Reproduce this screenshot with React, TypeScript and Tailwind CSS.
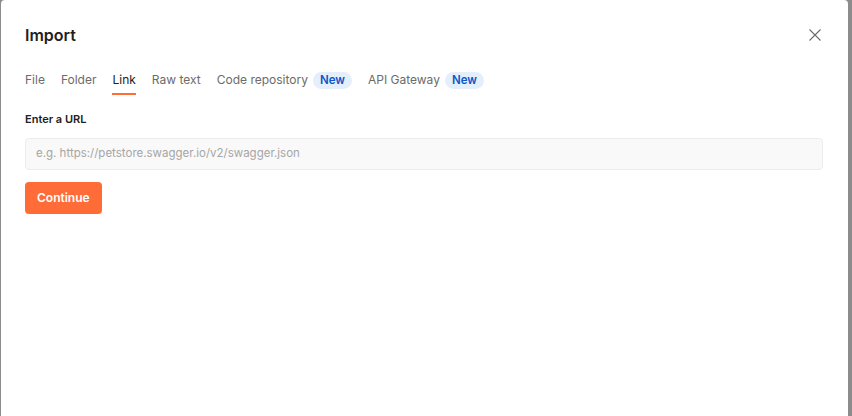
import React from "react";

const tabs = [
  { label: "File" },
  { label: "Folder" },
  { label: "Link", active: true },
  { label: "Raw text" },
  { label: "Code repository", badge: true },
  { label: "API Gateway", badge: true },
];

export default function App() {
  return (
    <div
      className="flex h-[416px] w-[852px] bg-[#8c8c8c] pl-px pr-[4px]"
      style={{ fontFamily: "Inter, 'Noto Sans', sans-serif" }}
    >
      <div className="flex-1 rounded-t-[4px] bg-white px-6 pt-[24px]">
        {/* Header */}
        <div className="flex items-center justify-between">
          <h1 className="text-[16px] font-semibold leading-[22px] text-[#212121]">
            Import
          </h1>
          <button className="mr-[2px] text-[#6b6b6b]">
            <svg width="14" height="14" viewBox="0 0 14 14" fill="none">
              <path
                d="M1.5 1.5L12.5 12.5M12.5 1.5L1.5 12.5"
                stroke="currentColor"
                strokeWidth="1.1"
              />
            </svg>
          </button>
        </div>

        {/* Tabs */}
        <div className="mt-[24px] flex items-center gap-4 text-[12px] leading-5">
          {tabs.map((t) => (
            <div key={t.label} className="relative flex items-center gap-[5px] pb-[3px]">
              <span className={t.active ? "text-[#212121]" : "text-[#6b6b6b]"}>
                {t.label}
              </span>
              {t.badge && (
                <span className="rounded-full bg-[#e5effc] px-[7px] text-[11.5px] font-semibold leading-[17px] text-[#0b57c5]">
                  New
                </span>
              )}
              {t.active && (
                <span className="absolute bottom-[-2px] left-0 right-0 h-[2px] bg-[#ff6c37]" />
              )}
            </div>
          ))}
        </div>

        {/* Body */}
        <div className="mt-[18px] text-[11px] font-semibold leading-4 text-[#212121]">
          Enter a URL
        </div>
        <div className="mr-[1px] mt-[11px] flex h-[32px] items-center rounded-[4px] border border-[#ececec] bg-[#f9f9f9] px-[10px] text-[11.5px] text-[#a6a6a6]">
          e.g. https://petstore.swagger.io/v2/swagger.json
        </div>
        <button className="mt-[12px] h-[32px] rounded-[4px] bg-[#ff6c37] px-3 text-[12px] font-semibold text-white">
          Continue
        </button>
      </div>
    </div>
  );
}
